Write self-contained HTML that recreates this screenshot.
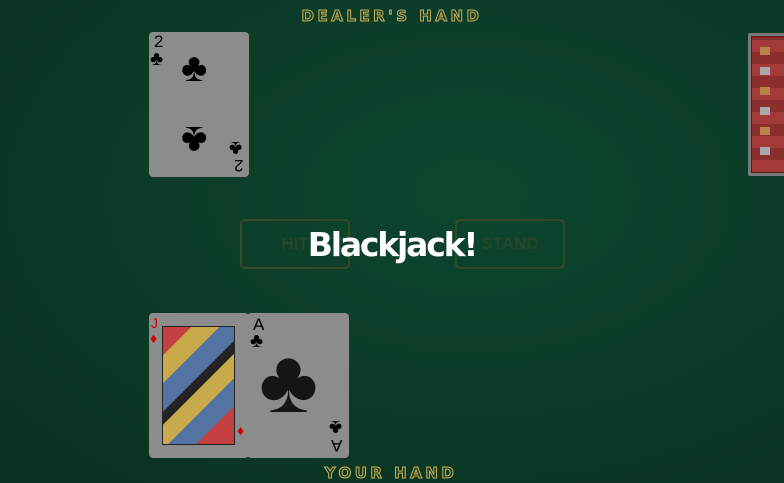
<!DOCTYPE html>
<html><head><style>
*{margin:0;padding:0;box-sizing:border-box}
body{width:784px;height:483px;overflow:hidden;position:relative;font-family:"Liberation Sans",sans-serif;
background:radial-gradient(ellipse at 60% 40%,#0d452d 0%,#0b3c27 50%,#08301f 100%)}
.lbl{position:absolute;color:#163a22;font-size:15px;font-weight:bold;letter-spacing:3.5px;-webkit-text-stroke:1px #c9b25a;width:784px;text-align:center;font-family:"DejaVu Sans",sans-serif}
.card{position:absolute;background:#8c8c8c;border-radius:4px;width:100px;height:145px}
.s{position:absolute;color:#000;line-height:1}
.btn{position:absolute;border:2px solid #34482a;border-radius:5px;color:#27452a;font-weight:bold;font-size:17px;text-align:center;line-height:46px}
</style></head><body>
<div class="lbl" style="top:7px">DEALER'S HAND</div>
<div class="lbl" style="top:464px;left:-1px">YOUR HAND</div>

<div class="card" style="left:149px;top:32px">
 <div class="s" style="left:5px;top:1px;font-size:17px">2</div>
 <div class="s" style="left:1px;top:17px;font-size:20px">♣</div>
 <div class="s" style="left:32px;top:16px;font-size:40px">♣</div>
 <div class="s" style="left:32px;top:88px;font-size:40px;transform:rotate(180deg)">♣</div>
 <div class="s" style="left:80px;top:106px;font-size:20px;transform:rotate(180deg)">♣</div>
 <div class="s" style="left:85px;top:125px;font-size:17px;transform:rotate(180deg)">2</div>
</div>

<div class="card" style="left:748px;top:33px;width:40px;height:143px;border-radius:2px;background:#7a7a7a;padding:3px">
 <div style="width:100%;height:100%;background:repeating-linear-gradient(0deg,#a33a3a 0 12px,#8a2e2e 12px 24px);border:1px solid #5a1a1a;position:relative">
  <div style="position:absolute;left:8px;top:10px;width:10px;height:115px;background:repeating-linear-gradient(180deg,#b8824a 0 8px,transparent 8px 20px,#aaa 20px 28px,transparent 28px 40px)"></div>
 </div>
</div>

<div class="card" style="left:149px;top:313px;width:100px">
 <div class="s" style="left:2px;top:3px;font-size:14px;color:#c00">J</div>
 <div class="s" style="left:1px;top:18px;font-size:14px;color:#c00">♦</div>
 <div style="position:absolute;left:13px;top:13px;width:73px;height:119px;border:1px solid #111;background:linear-gradient(135deg,#c33 0 15%,#d4b040 15% 30%,#4a6fa8 30% 45%,#111 45% 52%,#d4b040 52% 65%,#4a6fa8 65% 80%,#c33 80%);opacity:.85"></div>
 <div class="s" style="left:88px;top:112px;font-size:14px;color:#c00;transform:rotate(180deg)">♦</div>
</div>
<div class="card" style="left:247px;top:313px;width:102px">
 <div class="s" style="left:6px;top:3px;font-size:17px">A</div>
 <div class="s" style="left:3px;top:18px;font-size:20px">♣</div>
 <div class="s" style="left:12px;top:24px;font-size:90px;color:#151515">♣</div>
 <div class="s" style="left:82px;top:104px;font-size:20px;transform:rotate(180deg)">♣</div>
 <div class="s" style="left:84px;top:124px;font-size:17px;transform:rotate(180deg)">A</div>
</div>

<div class="btn" style="left:240px;top:219px;width:110px;height:50px">HIT</div>
<div class="btn" style="left:455px;top:219px;width:110px;height:50px">STAND</div>
<div style="position:absolute;left:0;width:784px;top:225px;text-align:center;color:#fff;font-weight:bold;font-size:33px;font-family:'DejaVu Sans',sans-serif;letter-spacing:-2.2px">Blackjack!</div>
</body></html>
